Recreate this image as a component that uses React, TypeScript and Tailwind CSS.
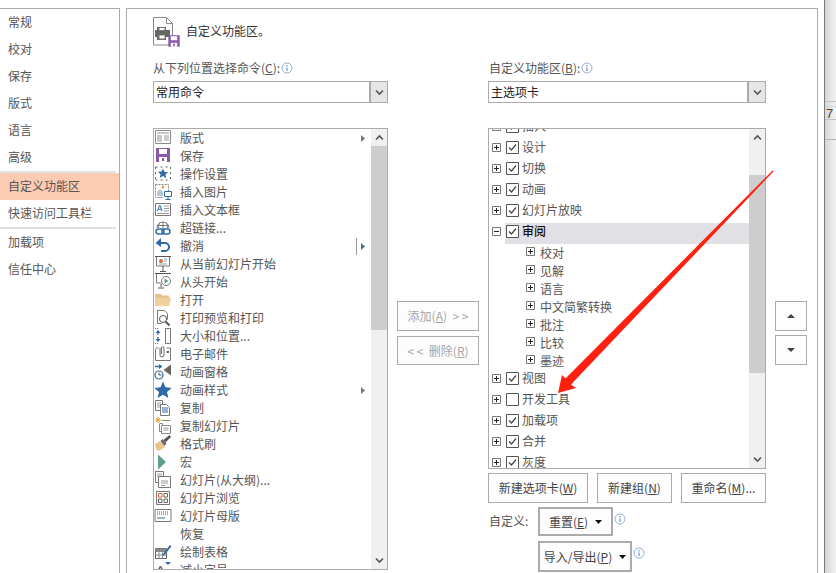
import type { ReactNode } from "react";

const Floppy = ({ x = 0, y = 0, s = 16 }: { x?: number; y?: number; s?: number }) => (
  <svg x={x} y={y} width={s} height={s} viewBox="0 0 16 16">
    <path d="M1 1h14v14H1z" fill="#8a5aa8" />
    <path d="M4 2h8v5H4z" fill="#fff" />
    <path d="M4 10h8v5H4z" fill="#fff" />
    <path d="M7 11h2v3H7z" fill="#8a5aa8" />
  </svg>
);

const icons: Record<string, ReactNode> = {
  layout: (
    <>
      <path d="M1.5 1.5h15v13h-15z" fill="#fff" stroke="#8a8a8a" />
      <path d="M3 3h12v2H3zM3 6h5v7H3z" fill="#c8c8c8" />
      <path d="M10 7h5M10 9h5M10 11h5" stroke="#9a9a9a" />
    </>
  ),
  save: <Floppy x={1} y={0} s={16} />,
  action: (
    <>
      <path d="M1.5 2h15M1.5 15h15M1.5 2v13M16.5 2v13" stroke="#666" strokeDasharray="2 3" fill="none" />
      <path d="M9 3.5l1.5 3.4 3.7.3-2.8 2.4.9 3.6L9 10.9l-3.3 1.9.9-3.6-2.8-2.4 3.7-.3z" fill="#2f6aa8" />
    </>
  ),
  picture: (
    <>
      <path d="M1.5 1.5h13v7M1.5 1.5v13h8" stroke="#8a8a8a" fill="none" strokeDasharray="2 1" />
      <circle cx="9" cy="4" r="1.5" fill="#e9a13b" />
      <path d="M3 13V9l3-3 3 3v4z" fill="#b4c6dc" />
      <path d="M10.5 8.5h7v5h-7z" fill="#fff" stroke="#2f6aa8" />
      <path d="M14 14v2M11.5 16.5h5" stroke="#2f6aa8" />
    </>
  ),
  textbox: (
    <>
      <path d="M1.5 2.5h15v12h-15z" fill="#fff" stroke="#777" />
      <path d="M3.5 10l2-5.5h.6l2 5.5M4.3 8.3h3" stroke="#2f6aa8" fill="none" />
      <path d="M10 5h5M10 7.5h5M10 10h5M3 12.5h12" stroke="#999" />
    </>
  ),
  link: (
    <>
      <path d="M3 9a6 6 0 0 1 12 0" fill="none" stroke="#777" />
      <path d="M9 3v6M6 3.5c-1.500 2-1.500 4-1.500 5.500M12 3.500c1.500 2 1.500 4 1.500 5.500M3 6.500h12" stroke="#777" fill="none" />
      <rect x="2" y="10" width="8" height="5" rx="2.500" fill="#fff" stroke="#2f6aa8" strokeWidth="1.500" />
      <rect x="8" y="10" width="8" height="5" rx="2.500" fill="none" stroke="#2f6aa8" strokeWidth="1.500" />
    </>
  ),
  undo: (
    <>
      <path d="M3 6h8a4 4 0 0 1 0 8H7" fill="none" stroke="#2f6aa8" strokeWidth="2" />
      <path d="M7 1L1.500 6 7 10z" fill="#2f6aa8" />
    </>
  ),
  current: (
    <>
      <path d="M1 1.500h16" stroke="#555" />
      <path d="M2.500 2v9h13V2" fill="#fff" stroke="#777" />
      <circle cx="7" cy="6" r="2" fill="#d9693a" />
      <path d="M10 4h3M10 6h3M5 9h8" stroke="#8aa0c0" />
      <path d="M9 11v5M6 16.500h6" stroke="#555" />
    </>
  ),
  fromStart: (
    <>
      <path d="M1 .5h16" stroke="#555" />
      <path d="M2.500 1v9h5" fill="none" stroke="#777" />
      <circle cx="12" cy="8" r="4.500" fill="#fff" stroke="#777" />
      <path d="M10.500 5.500l4 2.500-4 2.500z" fill="#5f9e8f" />
      <path d="M7 11v3M4 15h6" stroke="#555" />
    </>
  ),
  open: (
    <>
      <path d="M1 3h6l1.500 1.500H15V8H1z" fill="#e2c38a" />
      <path d="M1 7h16l-2 8H1z" fill="#f0d19c" />
    </>
  ),
  preview: (
    <>
      <path d="M3.500 1.500h7l3 3v6M3.500 1.500v13h4" fill="none" stroke="#777" />
      <circle cx="9" cy="10" r="3.500" fill="#fff" stroke="#555" />
      <path d="M11.500 12.500l4 4" stroke="#555" strokeWidth="2" />
    </>
  ),
  size: (
    <>
      <path d="M1 1.500h3M1 16.500h3" stroke="#666" strokeDasharray="1 1" />
      <path d="M4 3L1.500 6h5zM4 15l-2.500-3h5z" fill="#2f6aa8" />
      <path d="M3.300 5h1.400v2.500H3.300zM3.300 10h1.400v2.500H3.300z" fill="#2f6aa8" />
      <path d="M11.500 1.500h5v15h-5z" fill="#fff" stroke="#777" />
    </>
  ),
  mail: (
    <>
      <path d="M1.500 4v11.500h15V3h-4M4.500 3H1.500" fill="none" stroke="#777" />
      <path d="M6 3v7a2 2 0 0 0 4 0V3a1.300 1.300 0 0 0-2.600 0v6" fill="none" stroke="#666" />
      <path d="M12.500 6h2.500v2h-2.500z" fill="#666" />
    </>
  ),
  pane: (
    <>
      <path d="M1 3.500h6" stroke="#2f6aa8" strokeWidth="1.500" />
      <path d="M5 1l3.500 2.500L5 6z" fill="#2f6aa8" />
      <circle cx="5" cy="12" r="4" fill="#fff" stroke="#2f6aa8" strokeWidth="1.200" />
      <path d="M5 9.500V12h2.500" stroke="#555" fill="none" />
      <path d="M17 1.500v11L9.500 7z" fill="#666" />
    </>
  ),
  star: <path d="M9 .5l2.500 5.800 6.200.6-4.700 4.100 1.400 6L9 13.800 3.600 17 5 11 .3 6.900l6.200-.6z" fill="#2f6aa8" />,
  copy: (
    <>
      <path d="M1.500 1.500h7v10h-7z" fill="#fff" stroke="#777" />
      <path d="M3 4h4M3 6h4M3 8h4" stroke="#999" />
      <path d="M6.500 5.500h6l3 3v8h-9z" fill="#fff" stroke="#777" />
      <path d="M8 9h6M8 11h6M8 13h6" stroke="#2f6aa8" />
    </>
  ),
  dup: (
    <>
      <path d="M4 0v6M1 3h6M2 1l4 4M6 1L2 5" stroke="#e9a13b" />
      <path d="M5.500 6.500h3v8h-3z" fill="#fff" stroke="#888" />
      <path d="M7.500 3.500h9M7.500 8.500h9v8h-9z" fill="#fff" stroke="#888" />
      <path d="M9.500 11h5M9.500 13h5" stroke="#999" />
    </>
  ),
  brush: (
    <>
      <path d="M1 9l5-3 5 6-6 4c-2 0-4-4-4-7z" fill="#ecc487" />
      <path d="M6.500 6l2-2 4 4.500-2 2.500z" fill="#666" />
      <path d="M9.500 5l6-5 1.500 2-5.500 5.500z" fill="#555" />
    </>
  ),
  macro: <path d="M4 1.500l8 7.500-8 7.500z" fill="#5f9e8f" />,
  outline: (
    <>
      <path d="M1.500 .5h8v11h-8z" fill="#fff" stroke="#777" />
      <path d="M3 3h5M3 5h5" stroke="#999" />
      <path d="M4.500 5.500h12v11h-12z" fill="#fff" stroke="#777" />
      <path d="M7 10h7M7 12h7M7 14.500h4" stroke="#999" />
    </>
  ),
  sorter: (
    <>
      <path d="M2.500 2.500h13v13h-13z" fill="#fff" stroke="#777" />
      <path d="M4.500 4.500h3.500v3.500H4.500z" fill="#fff" stroke="#d9693a" />
      <path d="M10 4.500h3.500v3.500H10zM4.500 10h3.500v3.500H4.500zM10 10h3.500v3.500H10z" fill="#fff" stroke="#666" />
    </>
  ),
  master: (
    <>
      <path d="M1 2.500h16v12H1z" fill="#fff" stroke="#777" />
      <path d="M3 5h12M3 7h12" stroke="#555" strokeDasharray="1 1" />
      <path d="M3 11h8" stroke="#2f6aa8" />
    </>
  ),
  table: (
    <>
      <path d="M1.500 5.500h11v10h-11z" fill="#fff" stroke="#666" />
      <path d="M1.500 8.500h11M5 5.500v10M8.500 5.500v10M1.500 12h11" stroke="#888" />
      <path d="M1.500 5.500h11v3h-11z" fill="#888" />
      <path d="M9 11l7-9 1.500 1.300L10.500 12 8.500 13z" fill="#2f6aa8" />
    </>
  ),
  shrink: (
    <>
      <path d="M11 1h6l-3 3z" fill="#2f6aa8" />
      <path d="M2 15L6 6h1l4 9" stroke="#666" strokeWidth="1.500" fill="none" />
    </>
  ),
};

const commands: { label: string; icon?: string; arrow?: boolean; split?: boolean }[] = [
  { label: "版式", icon: "layout", arrow: true },
  { label: "保存", icon: "save" },
  { label: "操作设置", icon: "action" },
  { label: "插入图片", icon: "picture" },
  { label: "插入文本框", icon: "textbox" },
  { label: "超链接...", icon: "link" },
  { label: "撤消", icon: "undo", arrow: true, split: true },
  { label: "从当前幻灯片开始", icon: "current" },
  { label: "从头开始", icon: "fromStart" },
  { label: "打开", icon: "open" },
  { label: "打印预览和打印", icon: "preview" },
  { label: "大小和位置...", icon: "size" },
  { label: "电子邮件", icon: "mail" },
  { label: "动画窗格", icon: "pane" },
  { label: "动画样式", icon: "star", arrow: true },
  { label: "复制", icon: "copy" },
  { label: "复制幻灯片", icon: "dup" },
  { label: "格式刷", icon: "brush" },
  { label: "宏", icon: "macro" },
  { label: "幻灯片(从大纲)...", icon: "outline" },
  { label: "幻灯片浏览", icon: "sorter" },
  { label: "幻灯片母版", icon: "master" },
  { label: "恢复" },
  { label: "绘制表格", icon: "table" },
  { label: "减小字号", icon: "shrink" },
];

const tree: { label: string; checked?: boolean; sub?: boolean; open?: boolean }[] = [
  { label: "插入", checked: true },
  { label: "设计", checked: true },
  { label: "切换", checked: true },
  { label: "动画", checked: true },
  { label: "幻灯片放映", checked: true },
  { label: "审阅", checked: true, open: true },
  { label: "校对", sub: true },
  { label: "见解", sub: true },
  { label: "语言", sub: true },
  { label: "中文简繁转换", sub: true },
  { label: "批注", sub: true },
  { label: "比较", sub: true },
  { label: "墨迹", sub: true },
  { label: "视图", checked: true },
  { label: "开发工具", checked: false },
  { label: "加载项", checked: true },
  { label: "合并", checked: true },
  { label: "灰度", checked: true },
];

function Info() {
  return (
    <svg width="12" height="12" viewBox="0 0 12 12" className="shrink-0">
      <circle cx="6" cy="6" r="5" fill="#fff" stroke="#8fb0dc" />
      <path d="M6 3v1.500M6 5.500V9" stroke="#4f7fbf" />
    </svg>
  );
}

function Chevron({ up }: { up?: boolean }) {
  return (
    <svg width="9" height="7" viewBox="0 0 9 7">
      <path d={up ? "M1 5.500l3.500-3.500L8 5.500" : "M1 1.500L4.500 5 8 1.500"} fill="none" stroke="#555" strokeWidth="1.600" />
    </svg>
  );
}

function Scrollbar({ gap, thumb }: { gap: number; thumb: number }) {
  return (
    <div className="w-[16px] shrink-0 flex flex-col bg-[#f0f0f0]">
      <div className="h-[17px] shrink-0 flex items-center justify-center">
        <Chevron up />
      </div>
      <div className="shrink-0" style={{ height: gap }} />
      <div className="shrink-0 bg-[#cdcdcd]" style={{ height: thumb }} />
      <div className="flex-1" />
      <div className="h-[17px] shrink-0 flex items-center justify-center">
        <Chevron />
      </div>
    </div>
  );
}

function Select({ value }: { value: string }) {
  return (
    <div className="mt-[4px] h-[22px] flex border border-[#ababab] bg-white">
      <div className="flex-1 pl-[2px] text-[12px] leading-[20px] text-[#222]">{value}</div>
      <div className="w-[18px] bg-[#e6e6e6] border-l-2 border-[#ababab] flex items-center justify-center">
        <Chevron />
      </div>
    </div>
  );
}

function Btn({ children, className = "" }: { children: ReactNode; className?: string }) {
  return (
    <div className={`flex items-center justify-center border border-[#ababab] bg-[#fdfdfd] text-[12px] text-[#444] ${className}`}>
      {children}
    </div>
  );
}

function MenuBtn({ children, className = "" }: { children: ReactNode; className?: string }) {
  return (
    <div className={`flex items-center justify-center gap-[7px] border-[2px] border-[#ababab] bg-[#fdfdfd] text-[12px] text-[#444] ${className}`}>
      <span>{children}</span>
      <svg width="7" height="4" viewBox="0 0 7 4">
        <path d="M0 0h7L3.500 4z" fill="#111" />
      </svg>
    </div>
  );
}

function PlusBox({ minus, className = "" }: { minus?: boolean; className?: string }) {
  return (
    <svg width="9" height="9" viewBox="0 0 9 9" className={`shrink-0 ${className}`}>
      <path d="M.5.500h8v8h-8z" fill="#fff" stroke="#777" />
      <path d={minus ? "M2 4.500h5" : "M2 4.500h5M4.500 2v5"} stroke="#222" />
    </svg>
  );
}

function CheckBox({ checked }: { checked?: boolean }) {
  return (
    <svg width="13" height="13" viewBox="0 0 13 13" className="shrink-0">
      <path d="M.5.500h12v12H.5z" fill="#fff" stroke="#555" />
      {checked && <path d="M3 6.500l2.500 2.500L10 3.500" fill="none" stroke="#444" strokeWidth="1.200" />}
    </svg>
  );
}

function Sidebar() {
  const Item = ({ t, active }: { t: string; active?: boolean }) => (
    <div className={`h-[27px] pl-[8px] text-[12px] leading-[25px] text-[#555] ${active ? "bg-[#fccbb2]" : ""}`}>{t}</div>
  );
  return (
    <div className="w-[120px] h-[565px] mt-[8px] shrink-0 border-t border-r border-[#ababab]">
      {["常规", "校对", "保存", "版式", "语言", "高级"].map((t) => (
        <Item key={t} t={t} />
      ))}
      <div className="h-[2px] w-[116px] bg-[#e1e1e1]" />
      <Item t="自定义功能区" active />
      <Item t="快速访问工具栏" />
      <div className="h-[2px] w-[116px] bg-[#e1e1e1]" />
      <Item t="加载项" />
      <Item t="信任中心" />
    </div>
  );
}

export default function App() {
  return (
    <div className="relative flex w-[836px] h-[573px] overflow-hidden bg-white font-['Noto_Sans_CJK_SC','Liberation_Sans',sans-serif]">
      <Sidebar />

      <div className="ml-[6px] mt-[8px] w-[692px] h-[565px] shrink-0 border-t border-x border-[#ababab] pl-[26px]">
        {/* 标题 */}
        <div className="h-[50px] flex items-start pt-[8px]">
          <svg width="28" height="30" viewBox="0 0 28 30" className="shrink-0">
            <path d="M.5.500h13l6 6V28H.500z" fill="#fff" stroke="#8a8a8a" />
            <path d="M13.500.500v6h6" fill="none" stroke="#8a8a8a" />
            <path d="M2 13h2v-3h9v3h4v7h-4v3H4v-3H2z" fill="#666" />
            <path d="M6 10.500h6v3H6zM6 18h6v4H6z" fill="#fff" stroke="#777" />
            <Floppy x={14.500} y={17.500} s={13} />
          </svg>
          <span className="ml-[5px] mt-[5px] text-[12px] leading-[18px] text-[#333]">自定义功能区。</span>
        </div>

        <div className="flex gap-[9px]">
          {/* 左列 */}
          <div className="w-[235px] shrink-0">
            <div className="h-[18px] flex items-center gap-[1px] text-[12px] text-[#555]">
              <span>
                从下列位置选择命令(<span className="underline">C</span>):
              </span>
              <Info />
            </div>
            <Select value="常用命令" />
            <div className="mt-[25px] h-[442px] flex border border-[#ababab] overflow-hidden">
              <div className="flex-1 min-w-0 overflow-hidden">
                {commands.map((c) => (
                  <div key={c.label} className="h-[18px] flex items-center text-[12px] text-[#555]">
                    <div className="w-[18px] h-[18px] shrink-0">
                      {c.icon && (
                        <svg width="18" height="18" viewBox="0 0 18 18">
                          {icons[c.icon]}
                        </svg>
                      )}
                    </div>
                    <span className="ml-[8px] flex-1">{c.label}</span>
                    {c.split && <div className="w-px h-[17px] bg-[#999] mr-[4px]" />}
                    {c.arrow && (
                      <svg width="4" height="7" viewBox="0 0 4 7" className="mr-[6px]">
                        <path d="M0 0l4 3.500L0 7z" fill={c.split ? "#4a6a9a" : "#777"} />
                      </svg>
                    )}
                  </div>
                ))}
              </div>
              <Scrollbar gap={0} thumb={184} />
            </div>
          </div>

          {/* 添加 / 删除 */}
          <div className="w-[82px] shrink-0 pt-[242px] flex flex-col gap-[5px]">
            <Btn className="h-[30px]">
              <span className="text-[#a6a6a6] whitespace-pre">
                添加(<span className="underline">A</span>)  &gt; &gt;
              </span>
            </Btn>
            <Btn className="h-[29px]">
              <span className="text-[#a6a6a6] whitespace-pre">
                &lt; &lt;  删除(<span className="underline">R</span>)
              </span>
            </Btn>
          </div>

          {/* 右列 */}
          <div className="w-[278px] shrink-0">
            <div className="h-[18px] flex items-center gap-[1px] pl-[1px] text-[12px] text-[#555]">
              <span>
                自定义功能区(<span className="underline">B</span>):
              </span>
              <Info />
            </div>
            <Select value="主选项卡" />
            <div className="mt-[25px] h-[341px] flex border border-[#ababab] overflow-hidden">
              <div className="flex-1 min-w-0 overflow-hidden">
                <div className="-mt-[11px]">
                  {tree.map((r) =>
                    r.sub ? (
                      <div key={r.label} className="h-[18px] flex items-center text-[12px] text-[#555]">
                        <PlusBox className="ml-[37px] -mt-[3px]" />
                        <span className="ml-[5px]">{r.label}</span>
                      </div>
                    ) : (
                      <div key={r.label} className="h-[21px] flex">
                        <PlusBox minus={r.open} className="ml-[3px] mt-[4px]" />
                        <div className={`ml-[4px] flex-1 pl-[1px] pt-[2px] flex items-start ${r.open ? "bg-[#e1e1e5]" : ""}`}>
                          <CheckBox checked={r.checked} />
                          <span className={`ml-[3px] -mt-[1px] text-[12px] leading-[13px] ${r.open ? "text-[#111] font-medium" : "text-[#555]"}`}>
                            {r.label}
                          </span>
                        </div>
                      </div>
                    ),
                  )}
                </div>
              </div>
              <Scrollbar gap={29} thumb={198} />
            </div>

            <div className="mt-[4px] flex justify-between">
              <Btn className="w-[100px] h-[30px]">
                <span>
                  新建选项卡(<span className="underline">W</span>)
                </span>
              </Btn>
              <Btn className="w-[75px] h-[30px]">
                <span>
                  新建组(<span className="underline">N</span>)
                </span>
              </Btn>
              <Btn className="w-[85px] h-[30px]">
                <span>
                  重命名(<span className="underline">M</span>)...
                </span>
              </Btn>
            </div>

            <div className="mt-[4px] flex items-start">
              <span className="w-[50px] pl-[1px] text-[12px] leading-[28px] text-[#555]">自定义:</span>
              <MenuBtn className="w-[75px] h-[29px]">
                重置(<span className="underline">E</span>)
              </MenuBtn>
              <div className="ml-[1px] mt-[6px]">
                <Info />
              </div>
            </div>
            <div className="mt-[5px] ml-[50px] flex items-start">
              <MenuBtn className="w-[94px] h-[31px]">
                导入/导出(<span className="underline">P</span>)
              </MenuBtn>
              <div className="ml-[1px] mt-[6px]">
                <Info />
              </div>
            </div>
          </div>

          {/* 上移 / 下移 */}
          <div className="w-[32px] shrink-0 pt-[242px] flex flex-col gap-[4px]">
            <Btn className="h-[30px]">
              <svg width="8" height="4" viewBox="0 0 8 4">
                <path d="M4 0l4 4H0z" fill="#444" />
              </svg>
            </Btn>
            <Btn className="h-[30px]">
              <svg width="8" height="4" viewBox="0 0 8 4">
                <path d="M0 0h8L4 4z" fill="#444" />
              </svg>
            </Btn>
          </div>
        </div>
      </div>

      {/* 后面窗口的边缘 */}
      <div className="ml-[6px] flex-1 border-l border-[#7a7a7a] bg-gradient-to-r from-[#d6d6d6] to-[#f4f4f4]">
        <div className="h-[102px] border-b border-[#c4c4c4]" />
        <div className="h-[5px] border-b border-[#d4d4d4]" />
        <div className="h-[13px] border-b border-[#c4c4c4] pl-[1px] text-[13px] leading-[13px] text-[#444] font-['Liberation_Sans',sans-serif]">7</div>
        <div className="h-[20px] border-b border-[#b4b4b4]" />
      </div>

      {/* 红色箭头 */}
      <svg width="836" height="573" viewBox="0 0 836 573" className="absolute inset-0 pointer-events-none">
        <path d="M772.500 170.500L773.500 171.500L571 384.500L576 388L558 393L562 375L565.500 378.500Z" fill="#ff2010" />
      </svg>
    </div>
  );
}
